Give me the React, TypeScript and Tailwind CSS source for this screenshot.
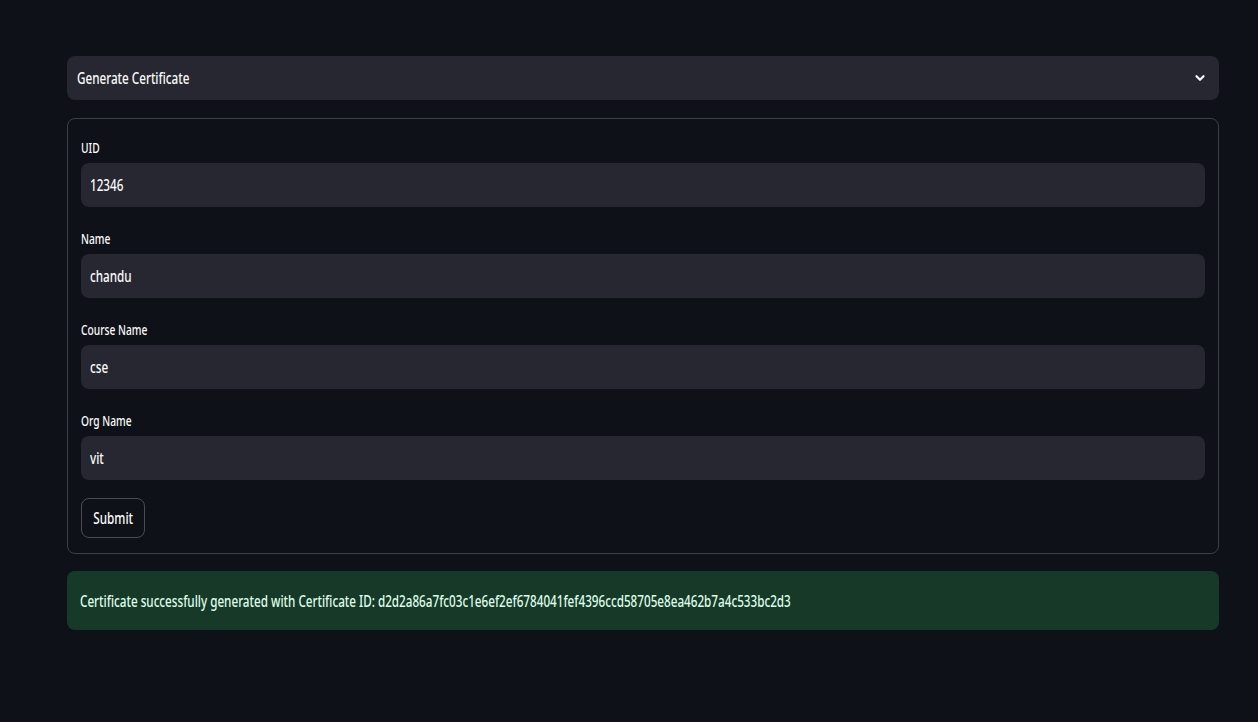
import React from "react";

const font = { fontFamily: '"Noto Sans", "Open Sans", sans-serif' };

function T({ children, className = "" }: { children: React.ReactNode; className?: string }) {
  return <span className={`inline-block origin-left scale-x-[0.73] whitespace-nowrap ${className}`}>{children}</span>;
}

function Field({ label, value }: { label: string; value: string }) {
  return (
    <div className="flex flex-col">
      <div className="h-[31px] flex items-center text-[14px] font-medium text-[#fafafa]">
        <T>{label}</T>
      </div>
      <div className="h-[44px] rounded-[8px] bg-[#262730] flex items-center px-[9px] text-[16px] font-medium text-[#fafafa]">
        <T>{value}</T>
      </div>
    </div>
  );
}

export default function App() {
  return (
    <div className="w-[1258px] h-[722px] bg-[#0e1117] pt-[56px] pl-[67px] pr-[39px] overflow-hidden" style={font}>
      <div className="h-[44px] rounded-[8px] bg-[#262730] flex items-center justify-between pl-[10px] pr-[13px]">
        <span className="text-[16px] font-medium text-[#fafafa]">
          <T>Generate Certificate</T>
        </span>
        <svg width="12" height="12" viewBox="0 0 24 24" fill="none" stroke="#fafafa" strokeWidth="4.5" strokeLinecap="round" strokeLinejoin="round">
          <path d="M5 8.5l7 7 7-7" />
        </svg>
      </div>
      <div className="mt-[18px] h-[436px] rounded-[8px] border border-[#3d3f47] px-[13px] pt-[13px] flex flex-col gap-[16px]">
        <Field label="UID" value="12346" />
        <Field label="Name" value="chandu" />
        <Field label="Course Name" value="cse" />
        <Field label="Org Name" value="vit" />
        <div className="pt-[2px]">
          <button className="h-[40px] w-[64px] rounded-[8px] border border-[#4a4c55] text-[16px] font-medium text-[#fafafa] flex items-center justify-center">
            <span className="inline-block scale-x-[0.73] whitespace-nowrap">Submit</span>
          </button>
        </div>
      </div>
      <div className="mt-[17px] h-[59px] rounded-[8px] bg-[#173a28] flex items-center px-[13px] text-[16px] font-medium text-[#dffde9]">
        <T>Certificate successfully generated with Certificate ID: d2d2a86a7fc03c1e6ef2ef6784041fef4396ccd58705e8ea462b7a4c533bc2d3</T>
      </div>
    </div>
  );
}
